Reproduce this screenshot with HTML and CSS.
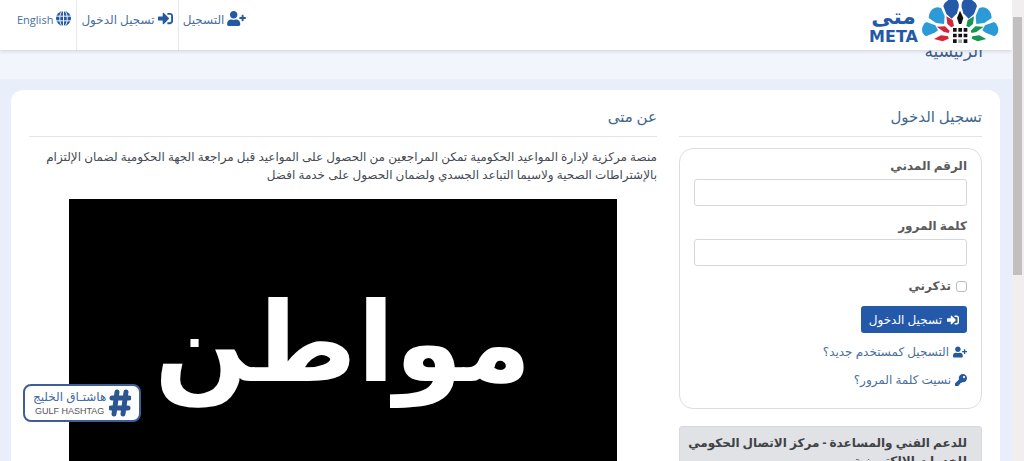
FILE: index.html
```html
<!DOCTYPE html>
<html lang="ar" dir="rtl">
<head>
<meta charset="utf-8">
<meta name="viewport" content="width=device-width, initial-scale=1">
<title>متى - تسجيل الدخول</title>
<link rel="stylesheet" href="styles.css">
</head>
<body>
<svg class="sprite" aria-hidden="true">
  <symbol id="user-plus" viewBox="0 0 640 512"><path d="M624 208h-64v-64c0-8.800-7.200-16-16-16h-32c-8.800 0-16 7.200-16 16v64h-64c-8.800 0-16 7.200-16 16v32c0 8.800 7.200 16 16 16h64v64c0 8.800 7.200 16 16 16h32c8.800 0 16-7.200 16-16v-64h64c8.800 0 16-7.200 16-16v-32c0-8.800-7.200-16-16-16zm-400 48c70.700 0 128-57.300 128-128S294.700 0 224 0 96 57.300 96 128s57.300 128 128 128zm89.600 32h-16.700c-22.200 10.200-46.900 16-72.900 16s-50.600-5.800-72.900-16h-16.700C60.200 288 0 348.200 0 422.400V464c0 26.500 21.500 48 48 48h352c26.500 0 48-21.500 48-48v-41.600c0-74.200-60.200-134.400-134.400-134.400z"/></symbol>
  <symbol id="sign-in" viewBox="0 0 512 512"><path d="M416 448h-84c-6.600 0-12-5.400-12-12v-40c0-6.600 5.400-12 12-12h84c17.700 0 32-14.300 32-32V160c0-17.700-14.300-32-32-32h-84c-6.600 0-12-5.400-12-12V76c0-6.600 5.400-12 12-12h84c53 0 96 43 96 96v192c0 53-43 96-96 96zm-47-209L201 71c-15-15-41-4.500-41 17v96H24c-13.300 0-24 10.700-24 24v96c0 13.300 10.700 24 24 24h136v96c0 21.500 26 32 41 17l168-168c9.300-9.400 9.300-24.600 0-34z"/></symbol>
  <symbol id="key" viewBox="0 0 512 512"><path d="M512 176C512 273 433 352 336 352c-11 0-22-1-33-3l-24 27A24 24 0 0 1 261 384H224v40c0 13-11 24-24 24h-40v40c0 13-11 24-24 24H24c-13 0-24-11-24-24v-78c0-6 3-12 7-17l162-162C163 214 160 195 160 176 160 79 239 0 336 0 433 0 512 79 512 176zM336 128c0 27 21 48 48 48s48-21 48-48-21-48-48-48-48 21-48 48z"/></symbol>
  <symbol id="globe" viewBox="0 0 32 32"><circle cx="16" cy="16" r="16"/><g fill="none" stroke="#fff" stroke-width="2"><path d="M0 11h32M0 21h32M16 0v32"/><ellipse cx="16" cy="16" rx="8" ry="17"/></g></symbol>
</svg>
<div class="window">
  <div class="page">
    <header class="topbar">
      <a class="brand" href="#" aria-label="META متى">
        <svg class="emblem" viewBox="214 0 232 132" aria-hidden="true">
          <g fill="#2a9bd6">
            <path id="low" d="M254 98L228 109Q216 103 216 88Q218 73 229 66L256 76L264 91Z"/>
            <path id="mid" d="M282 72L258 69L236 54Q237 36 248 27Q260 18 274 25L284 48Z"/>
            <use href="#low" transform="matrix(-1 0 0 1 661 0)"/>
            <use href="#mid" transform="matrix(-1 0 0 1 661 0)"/>
          </g>
          <g fill="#2459a9">
            <path id="top" d="M305 56L289 42L280 18Q283 7 295 0H320Q328 8 326 22L321 40Z"/>
            <use href="#top" transform="matrix(-1 0 0 1 661 0)"/>
          </g>
          <path fill="#111" d="M330 32L340 54L334 72H327L321 54Z"/>
          <g id="kites">
            <path fill="#d3263b" d="M289 49L308 60L312 78L304 82L292 72ZM260 80L285 79L299 92L296 99L282 96ZM252 117L273 106L294 109L296 116L278 124Z"/>
          </g>
          <path fill="#159653" d="M372 49L353 60L349 78L357 82L369 72ZM401 80L376 79L362 92L365 99L379 96ZM409 117L388 106L367 109L365 116L383 124Z"/>
          <path fill="#111" d="M309 84h11v11h-11zm16 0h11v11h-11zm16 0h11v11h-11zM309 101h11v11h-11zm16 0h11v11h-11zm16 0h11v11h-11zM309 118h11v11h-11zm32 0h11v11h-11z"/>
          <path fill="#aaa" d="M325 118h11v11h-11z"/>
        </svg>
        <span class="wordmark"><span class="wordmark-ar">متى</span><span class="wordmark-en" lang="en">META</span></span>
      </a>
      <nav class="nav">
        <a href="#"><svg class="icon wide"><use href="#user-plus"/></svg>التسجيل</a>
        <a href="#"><svg class="icon"><use href="#sign-in"/></svg>تسجيل الدخول</a>
        <a class="language" href="#" lang="en"><svg class="icon"><use href="#globe"/></svg>English</a>
      </nav>
    </header>
    <div class="titlebar"><h1>الرئيسية</h1></div>
    <main class="card">
      <section class="login">
        <h2>تسجيل الدخول</h2>
        <form class="form">
          <label for="civil">الرقم المدني</label>
          <input class="field" id="civil" type="text">
          <label for="password">كلمة المرور</label>
          <input class="field" id="password" type="password">
          <div class="remember"><input id="remember" type="checkbox"><label for="remember">تذكرني</label></div>
          <button type="button"><svg class="icon"><use href="#sign-in"/></svg>تسجيل الدخول</button>
          <a href="#"><svg class="icon wide"><use href="#user-plus"/></svg>التسجيل كمستخدم جديد؟</a>
          <a href="#"><svg class="icon"><use href="#key"/></svg>نسيت كلمة المرور؟</a>
        </form>
        <div class="support">للدعم الفني والمساعدة - مركز الاتصال الحكومي للخدمات الالكترونية</div>
      </section>
      <section class="about">
        <h2>عن متى</h2>
        <p>منصة مركزية لإدارة المواعيد الحكومية تمكن المراجعين من الحصول على المواعيد قبل مراجعة الجهة الحكومية لضمان الإلتزام بالإشتراطات الصحية ولاسيما التباعد الجسدي ولضمان الحصول على خدمة افضل</p>
        <div class="video">مواطن</div>
      </section>
    </main>
  </div>
  <div class="scrollbar"><div class="thumb"></div></div>
</div>
<div class="watermark">
  <svg viewBox="0 0 22 28" aria-hidden="true"><path d="M8 3L5 25M17 3L14 25M3 9H20M2 19H19"/></svg>
  <div class="watermark-text"><span class="watermark-ar">هاشتـاق الخليج</span><span class="watermark-en" lang="en">GULF HASHTAG</span></div>
</div>
</body>
</html>
```
FILE: styles.css
```css
* { box-sizing: border-box; }
body {
  margin: 0;
  height: 100vh;
  overflow: hidden;
  background: #e8effb;
  color: #4b4b4b;
  font: 12px/18px "Open Sans", "DejaVu Sans", sans-serif;
}
.sprite { display: none; }
a { color: #4a6f9c; text-decoration: none; }
.window { display: flex; height: 100vh; direction: ltr; }
.page { flex: 1; direction: rtl; overflow: hidden; }
.scrollbar { width: 12px; padding: 17px 2px 0 1px; background: #f0eeee; }
.thumb { height: 258px; background: #c1bfbf; }

.topbar {
  position: relative;
  display: flex;
  justify-content: space-between;
  height: 50px;
  padding-right: 13px;
  background: #fff;
  box-shadow: 0 1px 4px #00000026;
}
.brand { display: flex; gap: 3px; }
.emblem { width: 78px; height: 44px; }
.wordmark { display: flex; flex-direction: column; align-items: center; padding-top: 3px; color: #2459a9; font-weight: 700; }
.wordmark-ar { font-size: 22px; line-height: 24px; }
.wordmark-en { font: 900 16px/20px "DejaVu Sans", sans-serif; }
.nav { display: flex; }
.nav a { display: flex; align-items: flex-start; gap: 3px; padding: 11px 5px 0 4px; border-right: 1px solid #e6e8ec; }
.nav a:first-child { padding-right: 12px; border-right: 0; }
.nav .language { padding-left: 17px; font-size: 11px; }
.icon { flex: none; width: 12px; height: 12px; fill: #2459a0; }
.icon.wide { width: 14px; height: 12px; }
.nav .icon { width: 15px; height: 15px; }
.nav .icon.wide { width: 19px; height: 15px; }

.titlebar { height: 29px; padding-right: 29px; overflow: hidden; background: #f2f5fc; }
h1 { margin: -11px 0 0; color: #3e618c; font-size: 17px; font-weight: 400; line-height: 24px; }

.card {
  display: grid;
  grid-template-columns: 303px 1fr;
  gap: 22px;
  margin: 11px 12px 0 11px;
  padding: 16px 18px;
  min-height: 460px;
  border-radius: 12px;
  background: #fff;
}
h2 { margin: 0 0 11px; padding-bottom: 9px; border-bottom: 1px solid #e4e5e7; color: #416690; font-size: 15px; font-weight: 400; line-height: 21px; }
.form {
  display: flex;
  flex-direction: column;
  align-items: flex-start;
  padding: 8px 14px 9px;
  border: 1px solid #dcdddf;
  border-radius: 14px;
}
.form label { color: #5b5b5b; font-weight: 700; }
.field { width: 100%; height: 27px; margin: 4px 0 11px; border: 1px solid #d5d7da; border-radius: 3px; background: #fff; }
.remember { display: flex; align-items: center; gap: 5px; }
.remember input { appearance: none; width: 11px; height: 11px; margin: 0; border: 1px solid #bbb; border-radius: 3px; }
button {
  display: flex;
  align-items: center;
  gap: 5px;
  height: 27px;
  margin: 11px 0 10px;
  padding: 0 8px;
  border: 0;
  border-radius: 3px;
  background: #2459a9;
  color: #fff;
  font: inherit;
}
button .icon { fill: #fff; }
.form a { display: flex; align-items: center; gap: 4px; margin-bottom: 10px; }
.support { margin-top: 17px; padding: 7px 14px 7px 4px; border: 1px solid #d8d9dc; border-radius: 3px; background: #e1e2e5; color: #3f4246; font-weight: 700; }

p { margin: 0 0 15px; color: #454b52; }
.video {
  display: flex;
  align-items: center;
  justify-content: center;
  height: 308px;
  margin: 0 40px;
  padding-bottom: 30px;
  background: #000;
  color: #fff;
  font-size: 110px;
  font-weight: 700;
  line-height: 160px;
}

.watermark {
  position: absolute;
  left: 23px;
  top: 384px;
  display: flex;
  align-items: center;
  gap: 3px;
  height: 38px;
  padding: 0 8px;
  border: 2px solid #3d5e97;
  border-radius: 8px;
  background: #fff;
}
.watermark svg { width: 22px; height: 28px; fill: none; stroke: #2d5590; stroke-width: 5; stroke-linecap: round; }
.watermark-text { display: flex; flex-direction: column; align-items: center; }
.watermark-ar { color: #4268a0; font-size: 12px; line-height: 17px; }
.watermark-en { color: #555; font: 9px/13px "Liberation Sans", sans-serif; }
```
